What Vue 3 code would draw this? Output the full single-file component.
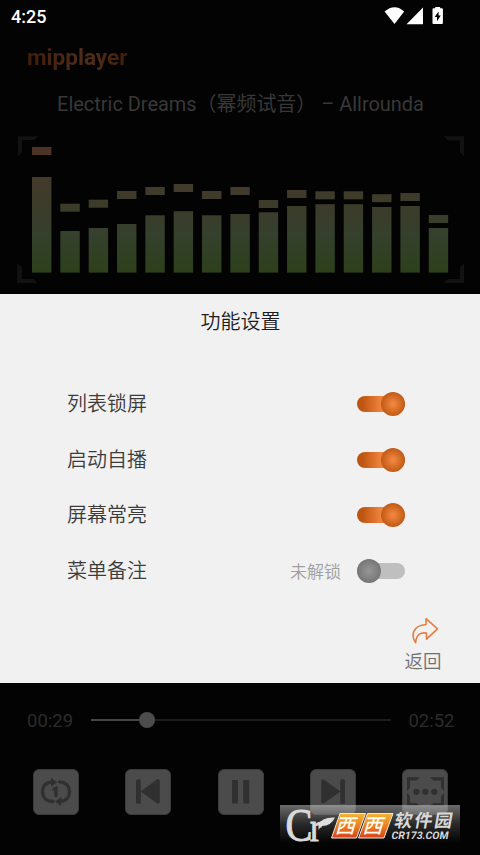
<script setup>
import { ref } from 'vue'

const bars = [
  { peak: 147, top: 177 },
  { peak: 203.7, top: 231 },
  { peak: 199.7, top: 228 },
  { peak: 191, top: 224 },
  { peak: 187, top: 215.3 },
  { peak: 184, top: 211.2 },
  { peak: 191, top: 215.3 },
  { peak: 187, top: 214 },
  { peak: 200, top: 212.3 },
  { peak: 190, top: 206 },
  { peak: 191.3, top: 204.2 },
  { peak: 191.3, top: 204.2 },
  { peak: 194.2, top: 207 },
  { peak: 193, top: 206 },
  { peak: 215, top: 228 },
]
const baseline = 272.6
const barX = (i) => 32 + i * 28.34

const settings = ref([
  { label: '列表锁屏', on: true },
  { label: '启动自播', on: true },
  { label: '屏幕常亮', on: true },
  { label: '菜单备注', on: false, note: '未解锁' },
])
</script>

<template>
  <div class="screen">
    <header class="status">
      <span class="clock">4:25</span>
      <svg class="status-icons" width="60" height="20" viewBox="384 6 60 20">
        <path d="M384.600 11.500Q389.500 7.200 394.500 7.200T404.200 11.500L394.500 24Z" fill="#fff" />
        <path d="M406.500 24.200H423V7.500Z" fill="#fff" />
        <path d="M433.500 8.300h1.800V7h4.800v1.300h1.800q1 0 1 1v13.800q0 1-1 1h-8.400q-1 0-1-1V9.300q0-1 1-1Z" fill="#fff" />
        <path d="M438.600 11.500l-4 5.500h2.400v4.200l3.800-5.700h-2.200Z" fill="#000" />
      </svg>
    </header>
    <h1 class="brand">mipplayer</h1>
    <p class="track">Electric Dreams（幂频试音） – Allrounda</p>

    <svg class="spectrum" width="480" height="168" viewBox="0 126 480 168">
      <defs>
        <linearGradient id="level" gradientUnits="userSpaceOnUse" x1="0" y1="147" x2="0" y2="272">
          <stop offset="0" stop-color="#4d3224" />
          <stop offset=".25" stop-color="#433a2a" />
          <stop offset=".5" stop-color="#3b3c2a" />
          <stop offset=".7" stop-color="#35402d" />
          <stop offset="1" stop-color="#2d401b" />
        </linearGradient>
      </defs>
      <g fill="#121212">
        <path d="M18 136.200H38L34 140H22V152.500L18 156Z" />
        <path d="M464 136.200H444L448 140.500H460V152.500L464 156Z" />
        <path d="M17.200 263L22 267.500V279H33.500L37.500 283H17.200Z" />
        <path d="M464 263.500L460 267.500V279H448L444 283H464Z" />
      </g>
      <g fill="url(#level)">
        <template v-for="(b, i) in bars" :key="i">
          <rect :x="barX(i)" :y="b.peak" width="19.4" height="8" />
          <rect :x="barX(i)" :y="b.top" width="19.4" :height="baseline - b.top" />
        </template>
      </g>
    </svg>

    <main class="panel">
      <h2 class="panel-title">功能设置</h2>
      <ul class="settings">
        <li v-for="s in settings" :key="s.label" class="setting">
          <span class="label">{{ s.label }}</span>
          <span v-if="s.note" class="note">{{ s.note }}</span>
          <button class="switch" :class="{ on: s.on }" @click="!s.note && (s.on = !s.on)">
            <i class="knob"></i>
          </button>
        </li>
      </ul>
      <div class="back">
        <svg width="30" height="30" viewBox="410 616 30 30" fill="none" stroke="#e37f40" stroke-width="1.600" stroke-linejoin="round" stroke-linecap="round">
          <path d="M427 618.700L438.500 628.800L427.500 639.200V633C421.500 632.200 417.300 634.500 416.600 642.700C411.500 635 414 625.500 427 624.500Z" />
        </svg>
        <span>返回</span>
      </div>
    </main>

    <footer class="player">
      <div class="progress">
        <span class="time">00:29</span>
        <div class="seek"><i class="played"></i><i class="thumb"></i><i class="rest"></i></div>
        <span class="time">02:52</span>
      </div>
      <div class="controls">
        <button class="control">
          <svg viewBox="0 0 46 46">
            <g fill="none" stroke="#303030" stroke-width="3.300" stroke-linecap="round">
              <path d="M19.500 12.800C12 13.500 9.500 18 9.500 22.500C9.500 29 14 32.500 20 32.500" />
              <path d="M26.500 12.800C33 13.300 36.500 17.500 36.500 22.500C36.500 27.500 33.500 32 27.500 32.300" />
            </g>
            <path d="M18 8.800L24.300 13.600L18 17.500ZM28.500 28L22 32.500L28 37Z" fill="#303030" />
            <path d="M19 20.500Q20 18 24.700 17V27.500Q23 29 21.200 27.500V21.500Q19.500 22.500 19 20.500Z" fill="#303030" />
          </svg>
        </button>
        <button class="control">
          <svg viewBox="0 0 46 46" fill="#303030">
            <rect x="11" y="10.200" width="4.800" height="24.500" rx="1.500" />
            <path d="M15.500 22.500L32 10.600Q34.800 9.500 34.800 12.500V32.500Q34.800 35 32 34.200Z" />
          </svg>
        </button>
        <button class="control">
          <svg viewBox="0 0 46 46" fill="#303030">
            <rect x="14" y="11" width="6" height="23.500" rx=".8" />
            <rect x="25.200" y="11" width="6" height="23.500" rx=".8" />
          </svg>
        </button>
        <button class="control">
          <svg viewBox="0 0 46 46" fill="#303030">
            <path d="M30.500 22.500L14 10.800Q11.200 9.500 11.200 12.500V32.500Q11.200 35 14 34.200Z" />
            <rect x="30.200" y="10.200" width="4.800" height="24.500" rx="1.500" />
          </svg>
        </button>
        <button class="control">
          <svg viewBox="0 0 46 46" fill="#303030">
            <path d="M5 8.300H18L14.500 11.500H8V19L5 22ZM28 8.300H42V22L39 19V11.500H31.500ZM5 24L8 27V34H14.500L18 37H5ZM42 24L39 27V34H31.500L28 37H42Z" />
            <circle cx="14.400" cy="22.800" r="3.100" />
            <circle cx="23.400" cy="22.800" r="3.100" />
            <circle cx="32.400" cy="22.800" r="3.100" />
          </svg>
        </button>
      </div>
    </footer>

    <div class="watermark">
      <svg width="180" height="38" viewBox="0 0 180 38">
        <defs>
          <linearGradient id="fire" x1="0" y1="0" x2="0" y2="1">
            <stop offset="0" stop-color="#f2b436" />
            <stop offset=".5" stop-color="#ea8224" />
            <stop offset="1" stop-color="#d5411c" />
          </linearGradient>
        </defs>
        <g transform="translate(5.5 35.5) scale(.86 1)">
          <text class="mark-cr" x="0" y="0" fill="#dadada">C<tspan class="mark-r">r</tspan></text>
        </g>
        <path d="M38.500 20Q41 12 55 12.500Q51 21 42 21Q40 22 38.500 25Z" fill="#dedede" />
        <g stroke="#f3e7d9" stroke-width="1" fill="url(#fire)">
          <path d="M60 8.500H85.500L76.500 33H51.500Z" />
          <path d="M87.500 8.500H113L104 33H78.500Z" />
        </g>
        <g transform="skewX(-16)" fill="#fff8ec">
          <text class="mark-xi" x="63" y="28.500">西</text>
          <text class="mark-xi" x="90.500" y="28.500">西</text>
        </g>
        <g transform="skewX(-10)" fill="#d9d9d9">
          <text class="mark-name" x="117.500" y="22.500" textLength="58">软件园</text>
          <text class="mark-url" x="117" y="34" textLength="57" lengthAdjust="spacingAndGlyphs">CR173.COM</text>
        </g>
      </svg>
    </div>
  </div>
</template>

<style>
body {
  margin: 0;
  background: #030303;
}
</style>

<style scoped>
.screen {
  position: relative;
  width: 480px;
  height: 855px;
  overflow: hidden;
  background: #030303;
  font-family: Roboto, "Noto Sans CJK SC", sans-serif;
  display: flex;
  flex-direction: column;
}
.status {
  height: 32px;
  flex: none;
  display: flex;
  align-items: center;
  justify-content: space-between;
  padding: 0 36px 0 11px;
  box-sizing: border-box;
}
.clock {
  color: #fff;
  font-size: 18px;
  font-weight: 500;
  line-height: 32px;
  padding-top: 2px;
}
.brand {
  margin: 0;
  height: 50px;
  flex: none;
  padding-left: 27px;
  font-size: 22.600px;
  font-weight: 700;
  line-height: 51px;
  width: max-content;
  background: linear-gradient(90deg, #401e0a 27px, #502e1b 70%, #401e0a);
  background-clip: text;
  color: transparent;
}
.track {
  margin: 0;
  height: 44px;
  flex: none;
  line-height: 44px;
  font-size: 19.950px;
  text-align: center;
  color: #383838;
  white-space: pre;
  padding-left: 1px;
}
.spectrum {
  display: block;
  flex: none;
}
.panel {
  height: 389px;
  flex: none;
  background: #f1f1f1;
  display: flex;
  flex-direction: column;
}
.panel-title {
  margin: 0;
  height: 55px;
  line-height: 57px;
  text-align: center;
  font-size: 20px;
  font-weight: 350;
  color: #1c1c1c;
  padding-left: 1px;
}
.settings {
  list-style: none;
  margin: 0;
  padding: 27px 75px 0 67px;
}
.setting {
  height: 55.700px;
  display: flex;
  align-items: center;
}
.label {
  flex: 1;
  font-size: 20px;
  font-weight: 350;
  line-height: 28px;
  color: #3c3c3c;
}
.note {
  font-size: 17px;
  font-weight: 350;
  color: #a0a0a0;
  margin-right: 16px;
}
.switch {
  width: 48px;
  height: 16px;
  padding: 0;
  border: 0;
  border-radius: 8px;
  background: #bfbfbf;
  display: flex;
  align-items: center;
}
.switch.on {
  background: linear-gradient(90deg, #bd5410 10%, #ee813b 48%);
  justify-content: flex-end;
}
.knob {
  width: 24px;
  height: 24px;
  flex: none;
  border-radius: 50%;
  background: radial-gradient(circle, #929292 10%, #757575 72%);
}
.on .knob {
  background: radial-gradient(circle, #ef833d 10%, #bf5914 72%);
}
.back {
  align-self: flex-end;
  width: 38px;
  margin: 17px 38px 0 0;
  display: flex;
  flex-direction: column;
  align-items: center;
  font-size: 18.500px;
  font-weight: 350;
  line-height: 32px;
  color: #707070;
  white-space: nowrap;
}
.back svg {
  margin-left: 2px;
}
.player {
  flex: 1;
  display: flex;
  flex-direction: column;
}
.progress {
  height: 74px;
  display: flex;
  align-items: center;
  justify-content: space-between;
  padding: 0 25.500px 0 27px;
}
.time {
  font-size: 18.500px;
  line-height: 22px;
  padding-top: 1px;
  color: #2b2b2b;
}
.seek {
  width: 300px;
  display: flex;
  align-items: center;
}
.played {
  width: 48px;
  height: 2px;
  background: #454545;
}
.thumb {
  width: 16px;
  height: 16px;
  border-radius: 50%;
  background: #4c4c4c;
}
.rest {
  flex: 1;
  height: 2px;
  background: #1c1c1c;
}
.controls {
  display: flex;
  justify-content: space-between;
  padding: 12px 32px 0 33px;
}
.control {
  width: 46px;
  height: 46px;
  padding: 0;
  border: 1px solid #3b3b3b;
  border-radius: 6px;
  background: #4b4b4b;
  box-sizing: border-box;
}
.control svg {
  display: block;
  width: 46px;
  height: 46px;
  margin: -1px;
}
.watermark {
  position: absolute;
  left: 280px;
  top: 805px;
  width: 180px;
  height: 38px;
  background: linear-gradient(rgba(210, 210, 210, .5), rgba(80, 80, 80, .5) 50%, rgba(3, 3, 3, .9));
}
.watermark svg {
  display: block;
  overflow: visible;
}
.mark-cr {
  font: 400 47px "Liberation Serif", serif;
  letter-spacing: -3px;
  stroke: #dadada;
  stroke-width: 1px;
}
.mark-r {
  font-size: 40px;
}
.mark-xi {
  font: 500 20px "Noto Sans CJK SC", sans-serif;
}
.mark-name {
  font: 700 18px "Noto Sans CJK SC", sans-serif;
}
.mark-url {
  font: 700 10.500px Roboto, sans-serif;
}
</style>
